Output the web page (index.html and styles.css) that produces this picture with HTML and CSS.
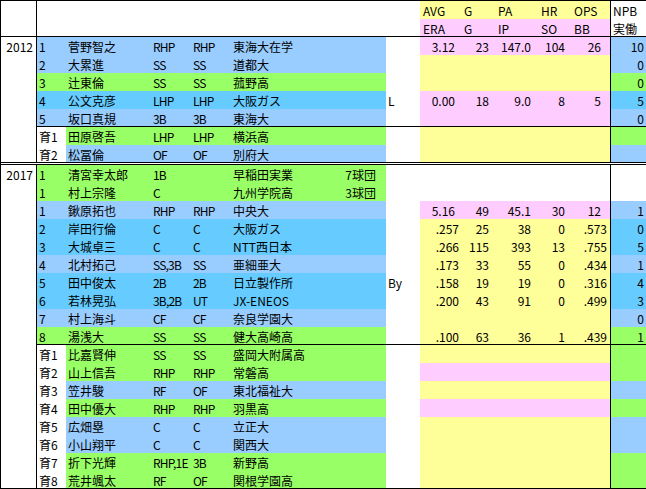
FILE: index.html
```html
<!DOCTYPE html>
<html lang="ja">
<head>
<meta charset="utf-8">
<title>Draft</title>
<link rel="stylesheet" href="styles.css">
</head>
<body>
<div class="sheet">
  <div class="block head">
    <div class="year"></div>
    <div class="rows">
      <div class="row hy">
        <div class="c"></div><div class="c"></div><div class="c"></div><div class="c"></div><div class="c"></div><div class="c"></div>
        <div class="c s h">AVG</div><div class="c s h">G</div><div class="c s h">PA</div><div class="c s h">HR</div><div class="c s h">OPS</div>
        <div class="c npb h">NPB</div>
      </div>
      <div class="row hp">
        <div class="c"></div><div class="c"></div><div class="c"></div><div class="c"></div><div class="c"></div><div class="c"></div>
        <div class="c s h">ERA</div><div class="c s h">G</div><div class="c s h">IP</div><div class="c s h">SO</div><div class="c s h">BB</div>
        <div class="c npb h">実働</div>
      </div>
    </div>
  </div>

  <div class="block dbl">
    <div class="year">2012</div>
    <div class="rows">
      <div class="sec">
        <div class="row lb sp pit">
          <div class="c f">1</div><div class="c f">菅野智之</div><div class="c f pos">RHP</div><div class="c f pos">RHP</div><div class="c f sch">東海大在学</div><div class="c hand"></div>
          <div class="c s">3.12</div><div class="c s">23</div><div class="c s">147.0</div><div class="c s">104</div><div class="c s">26</div>
          <div class="c f npb">10</div>
        </div>
        <div class="row lb sy">
          <div class="c f">2</div><div class="c f">大累進</div><div class="c f pos">SS</div><div class="c f pos">SS</div><div class="c f sch">道都大</div><div class="c hand"></div>
          <div class="c s"></div><div class="c s"></div><div class="c s"></div><div class="c s"></div><div class="c s"></div>
          <div class="c f npb">0</div>
        </div>
        <div class="row gr sy">
          <div class="c f">3</div><div class="c f">辻東倫</div><div class="c f pos">SS</div><div class="c f pos">SS</div><div class="c f sch">菰野高</div><div class="c hand"></div>
          <div class="c s"></div><div class="c s"></div><div class="c s"></div><div class="c s"></div><div class="c s"></div>
          <div class="c f npb">0</div>
        </div>
        <div class="row sk sp pit">
          <div class="c f">4</div><div class="c f">公文克彦</div><div class="c f pos">LHP</div><div class="c f pos">LHP</div><div class="c f sch">大阪ガス</div><div class="c hand">L</div>
          <div class="c s">0.00</div><div class="c s">18</div><div class="c s">9.0</div><div class="c s">8</div><div class="c s">5</div>
          <div class="c f npb">5</div>
        </div>
        <div class="row lb sp">
          <div class="c f">5</div><div class="c f">坂口真規</div><div class="c f pos">3B</div><div class="c f pos">3B</div><div class="c f sch">東海大</div><div class="c hand"></div>
          <div class="c s"></div><div class="c s"></div><div class="c s"></div><div class="c s"></div><div class="c s"></div>
          <div class="c f npb">0</div>
        </div>
      </div>
      <div class="sec">
        <div class="row gr sy ik">
          <div class="c f">育1</div><div class="c f">田原啓吾</div><div class="c f pos">LHP</div><div class="c f pos">LHP</div><div class="c f sch">横浜高</div><div class="c hand"></div>
          <div class="c s"></div><div class="c s"></div><div class="c s"></div><div class="c s"></div><div class="c s"></div>
          <div class="c f npb"></div>
        </div>
        <div class="row lb sy ik">
          <div class="c f">育2</div><div class="c f">松冨倫</div><div class="c f pos">OF</div><div class="c f pos">OF</div><div class="c f sch">別府大</div><div class="c hand"></div>
          <div class="c s"></div><div class="c s"></div><div class="c s"></div><div class="c s"></div><div class="c s"></div>
          <div class="c f npb"></div>
        </div>
      </div>
    </div>
  </div>

  <div class="block">
    <div class="year">2017</div>
    <div class="rows">
      <div class="sec">
        <div class="row gr sw nw">
          <div class="c f">1</div><div class="c f">清宮幸太郎</div><div class="c f pos">1B</div><div class="c f pos"></div><div class="c f sch">早稲田実業<span class="note">7球団</span></div><div class="c hand"></div>
          <div class="c s"></div><div class="c s"></div><div class="c s"></div><div class="c s"></div><div class="c s"></div>
          <div class="c f npb"></div>
        </div>
        <div class="row gr sw nw">
          <div class="c f">1</div><div class="c f">村上宗隆</div><div class="c f pos">C</div><div class="c f pos"></div><div class="c f sch">九州学院高<span class="note">3球団</span></div><div class="c hand"></div>
          <div class="c s"></div><div class="c s"></div><div class="c s"></div><div class="c s"></div><div class="c s"></div>
          <div class="c f npb"></div>
        </div>
        <div class="row lb sp pit">
          <div class="c f">1</div><div class="c f">鍬原拓也</div><div class="c f pos">RHP</div><div class="c f pos">RHP</div><div class="c f sch">中央大</div><div class="c hand"></div>
          <div class="c s">5.16</div><div class="c s">49</div><div class="c s">45.1</div><div class="c s">30</div><div class="c s">12</div>
          <div class="c f npb">1</div>
        </div>
        <div class="row sk sy">
          <div class="c f">2</div><div class="c f">岸田行倫</div><div class="c f pos">C</div><div class="c f pos">C</div><div class="c f sch">大阪ガス</div><div class="c hand"></div>
          <div class="c s">.257</div><div class="c s">25</div><div class="c s">38</div><div class="c s">0</div><div class="c s">.573</div>
          <div class="c f npb">0</div>
        </div>
        <div class="row sk sy">
          <div class="c f">3</div><div class="c f">大城卓三</div><div class="c f pos">C</div><div class="c f pos">C</div><div class="c f sch">NTT西日本</div><div class="c hand"></div>
          <div class="c s">.266</div><div class="c s">115</div><div class="c s">393</div><div class="c s">13</div><div class="c s">.755</div>
          <div class="c f npb">5</div>
        </div>
        <div class="row lb sy">
          <div class="c f">4</div><div class="c f">北村拓己</div><div class="c f pos">SS,3B</div><div class="c f pos">SS</div><div class="c f sch">亜細亜大</div><div class="c hand"></div>
          <div class="c s">.173</div><div class="c s">33</div><div class="c s">55</div><div class="c s">0</div><div class="c s">.434</div>
          <div class="c f npb">1</div>
        </div>
        <div class="row sk sy">
          <div class="c f">5</div><div class="c f">田中俊太</div><div class="c f pos">2B</div><div class="c f pos">2B</div><div class="c f sch">日立製作所</div><div class="c hand">By</div>
          <div class="c s">.158</div><div class="c s">19</div><div class="c s">19</div><div class="c s">0</div><div class="c s">.316</div>
          <div class="c f npb">4</div>
        </div>
        <div class="row sk sy">
          <div class="c f">6</div><div class="c f">若林晃弘</div><div class="c f pos">3B,2B</div><div class="c f pos">UT</div><div class="c f sch">JX-ENEOS</div><div class="c hand"></div>
          <div class="c s">.200</div><div class="c s">43</div><div class="c s">91</div><div class="c s">0</div><div class="c s">.499</div>
          <div class="c f npb">3</div>
        </div>
        <div class="row lb sy">
          <div class="c f">7</div><div class="c f">村上海斗</div><div class="c f pos">CF</div><div class="c f pos">CF</div><div class="c f sch">奈良学園大</div><div class="c hand"></div>
          <div class="c s"></div><div class="c s"></div><div class="c s"></div><div class="c s"></div><div class="c s"></div>
          <div class="c f npb">0</div>
        </div>
        <div class="row gr sy">
          <div class="c f">8</div><div class="c f">湯浅大</div><div class="c f pos">SS</div><div class="c f pos">SS</div><div class="c f sch">健大高崎高</div><div class="c hand"></div>
          <div class="c s">.100</div><div class="c s">63</div><div class="c s">36</div><div class="c s">1</div><div class="c s">.439</div>
          <div class="c f npb">1</div>
        </div>
      </div>
      <div class="sec">
        <div class="row gr sy ik">
          <div class="c f">育1</div><div class="c f">比嘉賢伸</div><div class="c f pos">SS</div><div class="c f pos">SS</div><div class="c f sch">盛岡大附属高</div><div class="c hand"></div>
          <div class="c s"></div><div class="c s"></div><div class="c s"></div><div class="c s"></div><div class="c s"></div>
          <div class="c f npb"></div>
        </div>
        <div class="row gr sp ik">
          <div class="c f">育2</div><div class="c f">山上信吾</div><div class="c f pos">RHP</div><div class="c f pos">RHP</div><div class="c f sch">常磐高</div><div class="c hand"></div>
          <div class="c s"></div><div class="c s"></div><div class="c s"></div><div class="c s"></div><div class="c s"></div>
          <div class="c f npb"></div>
        </div>
        <div class="row lb sy ik">
          <div class="c f">育3</div><div class="c f">笠井駿</div><div class="c f pos">RF</div><div class="c f pos">OF</div><div class="c f sch">東北福祉大</div><div class="c hand"></div>
          <div class="c s"></div><div class="c s"></div><div class="c s"></div><div class="c s"></div><div class="c s"></div>
          <div class="c f npb"></div>
        </div>
        <div class="row gr sp ik">
          <div class="c f">育4</div><div class="c f">田中優大</div><div class="c f pos">RHP</div><div class="c f pos">RHP</div><div class="c f sch">羽黒高</div><div class="c hand"></div>
          <div class="c s"></div><div class="c s"></div><div class="c s"></div><div class="c s"></div><div class="c s"></div>
          <div class="c f npb"></div>
        </div>
        <div class="row lb sy ik">
          <div class="c f">育5</div><div class="c f">広畑塁</div><div class="c f pos">C</div><div class="c f pos">C</div><div class="c f sch">立正大</div><div class="c hand"></div>
          <div class="c s"></div><div class="c s"></div><div class="c s"></div><div class="c s"></div><div class="c s"></div>
          <div class="c f npb"></div>
        </div>
        <div class="row lb sy ik">
          <div class="c f">育6</div><div class="c f">小山翔平</div><div class="c f pos">C</div><div class="c f pos">C</div><div class="c f sch">関西大</div><div class="c hand"></div>
          <div class="c s"></div><div class="c s"></div><div class="c s"></div><div class="c s"></div><div class="c s"></div>
          <div class="c f npb"></div>
        </div>
        <div class="row gr sy ik">
          <div class="c f">育7</div><div class="c f">折下光輝</div><div class="c f pos">RHP,1E</div><div class="c f pos">3B</div><div class="c f sch">新野高</div><div class="c hand"></div>
          <div class="c s"></div><div class="c s"></div><div class="c s"></div><div class="c s"></div><div class="c s"></div>
          <div class="c f npb"></div>
        </div>
        <div class="row gr sy ik">
          <div class="c f">育8</div><div class="c f">荒井颯太</div><div class="c f pos">RF</div><div class="c f pos">OF</div><div class="c f sch">関根学園高</div><div class="c hand"></div>
          <div class="c s"></div><div class="c s"></div><div class="c s"></div><div class="c s"></div><div class="c s"></div>
          <div class="c f npb"></div>
        </div>
      </div>
    </div>
  </div>
</div>
</body>
</html>
```

FILE: styles.css
```css
html, body {
  margin: 0;
  padding: 0;
  background: #fff;
}

.sheet {
  width: 646px;
  height: 489px;
  box-sizing: border-box;
  border-top: 1px solid #000;
  border-left: 1px solid #000;
  font-family: "Noto Sans CJK JP", sans-serif;
  font-size: 12px;
  color: #000;
  display: flex;
  flex-direction: column;
  overflow: hidden;
}

.block {
  display: flex;
  border-bottom: 1px solid #000;
}

.block.dbl {
  border-bottom: 3px double #000;
}

.year {
  width: 36px;
  flex: none;
  border-right: 1px solid #000;
  text-align: right;
  padding: 2px 3px 0 0;
  box-sizing: border-box;
  line-height: 16px;
}

.rows {
  display: flex;
  flex-direction: column;
  width: 609px;
  flex: none;
}

.sec + .sec {
  border-top: 1px solid #000;
}

.row {
  display: grid;
  grid-template-columns: 29px 85px 40px 40px 155px 34px 41px 34px 43px 33px 39px 36px;
  height: 18px;
}

.sec .row:last-child,
.head .row:last-child {
  height: 17px;
}

.c {
  padding: 2px 0 0 2px;
  line-height: 16px;
  white-space: nowrap;
  overflow: hidden;
  box-sizing: border-box;
}

.pos {
  letter-spacing: -0.8px;
}

.npb {
  border-left: 1px solid #000;
  text-align: right;
  padding: 2px 2px 0 0;
}

.npb.h {
  text-align: left;
  padding: 2px 0 0 2px;
}

.s {
  text-align: right;
}

.s.h {
  text-align: left;
  padding-left: 3px;
}

.row > .s:nth-child(7) { padding-right: 2px; }
.row > .s:nth-child(8) { padding-right: 6px; }
.row > .s:nth-child(9) { padding-right: 7px; }
.row > .s:nth-child(10) { padding-right: 6px; }
.row > .s:nth-child(11) { padding-right: 3px; }
.pit > .s:nth-child(7) { padding-right: 6px; }
.pit > .s:nth-child(11) { padding-right: 9px; }

.sch {
  display: flex;
  justify-content: space-between;
  padding-right: 10px;
}

.hy > .s { background: #ffff99; }
.hp > .s { background: #ffccff; }

.lb > .f { background: #99ccff; }
.sk > .f { background: #66ccff; }
.gr > .f { background: #99ff66; }

.sy > .s { background: #ffff99; }
.sp > .s { background: #ffccff; }
.sw > .s { background: #fff; }

.ik > .f:first-child { background: #fff; }
.nw > .npb { background: #fff; }
```
